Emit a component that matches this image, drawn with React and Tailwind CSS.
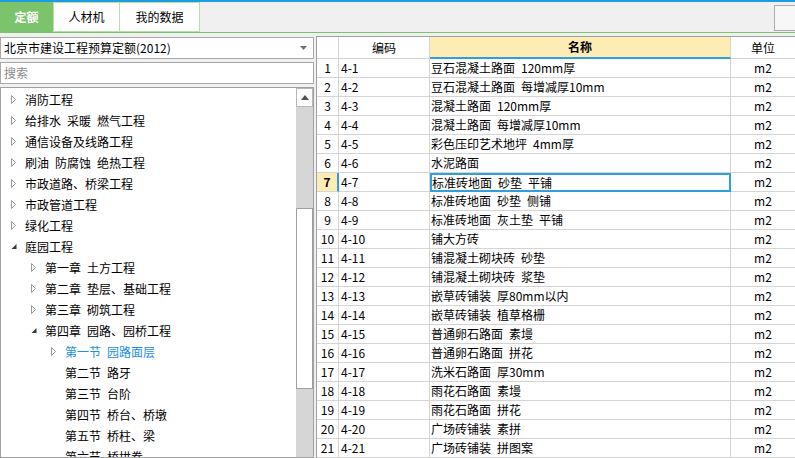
import React from "react";

const treeItems = [
  { level: 0, label: "消防工程", icon: "closed" },
  { level: 0, label: "给排水\u2002采暖\u2002燃气工程", icon: "closed" },
  { level: 0, label: "通信设备及线路工程", icon: "closed" },
  { level: 0, label: "刷油\u2002防腐蚀\u2002绝热工程", icon: "closed" },
  { level: 0, label: "市政道路、桥梁工程", icon: "closed" },
  { level: 0, label: "市政管道工程", icon: "closed" },
  { level: 0, label: "绿化工程", icon: "closed" },
  { level: 0, label: "庭园工程", icon: "open" },
  { level: 1, label: "第一章\u2002土方工程", icon: "closed" },
  { level: 1, label: "第二章\u2002垫层、基础工程", icon: "closed" },
  { level: 1, label: "第三章\u2002砌筑工程", icon: "closed" },
  { level: 1, label: "第四章\u2002园路、园桥工程", icon: "open" },
  { level: 2, label: "第一节\u2002园路面层", icon: "closed", selected: true },
  { level: 2, label: "第二节\u2002路牙" },
  { level: 2, label: "第三节\u2002台阶" },
  { level: 2, label: "第四节\u2002桥台、桥墩" },
  { level: 2, label: "第五节\u2002桥柱、梁" },
  { level: 2, label: "第六节\u2002桥拱券" },
];

const rows = [
  ["4-1", "豆石混凝土路面\u2002120mm厚"],
  ["4-2", "豆石混凝土路面\u2002每增减厚10mm"],
  ["4-3", "混凝土路面\u2002120mm厚"],
  ["4-4", "混凝土路面\u2002每增减厚10mm"],
  ["4-5", "彩色压印艺术地坪\u20024mm厚"],
  ["4-6", "水泥路面"],
  ["4-7", "标准砖地面\u2002砂垫\u2002平铺"],
  ["4-8", "标准砖地面\u2002砂垫\u2002侧铺"],
  ["4-9", "标准砖地面\u2002灰土垫\u2002平铺"],
  ["4-10", "铺大方砖"],
  ["4-11", "铺混凝土砌块砖\u2002砂垫"],
  ["4-12", "铺混凝土砌块砖\u2002浆垫"],
  ["4-13", "嵌草砖铺装\u2002厚80mm以内"],
  ["4-14", "嵌草砖铺装\u2002植草格栅"],
  ["4-15", "普通卵石路面\u2002素墁"],
  ["4-16", "普通卵石路面\u2002拼花"],
  ["4-17", "洗米石路面\u2002厚30mm"],
  ["4-18", "雨花石路面\u2002素墁"],
  ["4-19", "雨花石路面\u2002拼花"],
  ["4-20", "广场砖铺装\u2002素拼"],
  ["4-21", "广场砖铺装\u2002拼图案"],
];

const Expander = ({ type }) => {
  if (type === "closed")
    return (
      <svg width="6" height="9" viewBox="0 0 6 9">
        <polygon points="0.5,0.5 4.5,4.5 0.5,8.5" fill="#fff" stroke="#9a9a9a" />
      </svg>
    );
  if (type === "open")
    return (
      <svg width="6" height="9" viewBox="0 0 6 9">
        <polygon points="5.5,2 5.5,7 0.5,7" fill="#3a3a3a" />
      </svg>
    );
  return null;
};

const TreeRow = ({ item }) => {
  const pad = { 0: "pl-[10px]", 1: "pl-[30px]", 2: "pl-[50px]" }[item.level];
  return (
    <div className={`flex items-center h-[21px] ${pad}`}>
      <span className="w-[14px] flex items-center shrink-0">
        <Expander type={item.icon} />
      </span>
      <span
        className={`whitespace-pre text-[12px] ${
          item.selected ? "text-[#1a8fe6]" : "text-black"
        }`}
      >
        {item.label}
      </span>
    </div>
  );
};

const App = () => {
  return (
    <div className="w-[795px] h-[458px] overflow-hidden bg-[#f0f0f0] flex flex-col font-['Noto_Sans_CJK_SC',sans-serif] text-[12px]">
      <div className="h-[2px] bg-[#1b9de2] shrink-0" />
      <div className="h-[30px] flex shrink-0">
        <div className="w-[53px] bg-[#7cc46b] text-white font-bold flex items-center justify-center">
          定额
        </div>
        <div className="w-[67px] bg-white border border-[#b5e2a5] flex items-center justify-center">
          人材机
        </div>
        <div className="w-[80px] bg-white border border-l-0 border-[#b5e2a5] flex items-center justify-center">
          我的数据
        </div>
        <div className="flex-1" />
        <div className="w-[21px] h-[26px] mt-[3px] bg-[#f7f7f7] border border-r-0 border-[#ababab]" />
      </div>
      <div className="h-[1px] bg-[#7cc46b] shrink-0" />
      <div className="h-[3px] shrink-0" />

      <div className="flex flex-1 min-h-0">
        {/* left panel */}
        <div className="w-[314px] flex flex-col pt-[1px] shrink-0">
          <div className="h-[22px] bg-white border border-[#a9a9a9] flex items-center pl-[3px] pr-[6px]">
            <span className="flex-1">北京市建设工程预算定额(2012)</span>
            <svg width="7" height="4" viewBox="0 0 7 4">
              <polygon points="0,0 7,0 3.5,4" fill="#707070" />
            </svg>
          </div>
          <div className="h-[22px] mt-[3px] bg-white border border-[#a9a9a9] flex items-center pl-[3px] text-[#8a8a8a]">
            搜索
          </div>
          <div className="flex-1 mt-[3px] bg-white border border-[#a0a0a0] flex min-h-0">
            <div className="flex-1 pt-[1px] overflow-hidden">
              {treeItems.map((item, i) => (
                <TreeRow key={i} item={item} />
              ))}
            </div>
            <div className="w-[17px] bg-[#d6d6d6] flex flex-col">
              <div className="h-[19px] bg-[#fcfcfc] border border-[#b8b8b8] flex items-center justify-center shrink-0">
                <svg width="8" height="5" viewBox="0 0 8 5">
                  <polygon points="4,0 8,5 0,5" fill="#505050" />
                </svg>
              </div>
              <div className="h-[101px] shrink-0" />
              <div className="h-[181px] bg-white border border-[#a0a0a0] shrink-0" />
            </div>
          </div>
        </div>

        <div className="w-[2px] shrink-0" />

        {/* right table */}
        <div className="flex-1 bg-white border-l border-t border-[#a0a0a0] flex flex-col overflow-hidden">
          <div className="flex h-[22px] shrink-0">
            <div className="w-[22px] border-r border-b border-[#d4d4d4]" />
            <div className="w-[91px] border-r border-b border-[#d4d4d4] flex items-center justify-center">
              编码
            </div>
            <div className="w-[301px] bg-[#fdecb4] border-r border-[#d4d4d4] border-b-2 border-b-[#2fa0d9] flex items-center justify-center font-bold">
              名称
            </div>
            <div className="flex-1 border-b border-[#d4d4d4] flex items-center justify-center">
              单位
            </div>
          </div>
          {rows.map(([code, name], i) => {
            const sel = i === 6;
            return (
              <div key={code} className="flex h-[19px] shrink-0">
                <div
                  className={`w-[22px] border-b border-[#d4d4d4] flex items-center justify-center ${
                    sel
                      ? "bg-[#fdecb4] font-bold border-r-2 border-r-[#2fa0d9]"
                      : "border-r"
                  }`}
                >
                  {i + 1}
                </div>
                <div className="w-[91px] border-r border-b border-[#d4d4d4] flex items-center pl-[2px]">
                  {code}
                </div>
                <div
                  className={`w-[301px] flex items-center whitespace-pre ${
                    sel
                      ? "border-2 border-[#2fa0d9] pl-[0px]"
                      : "border-r border-b border-[#d4d4d4] pl-[1px]"
                  }`}
                >
                  {name}
                </div>
                <div className="flex-1 border-b border-[#d4d4d4] flex items-center justify-center">
                  m2
                </div>
              </div>
            );
          })}
        </div>
      </div>
    </div>
  );
};

export default App;
